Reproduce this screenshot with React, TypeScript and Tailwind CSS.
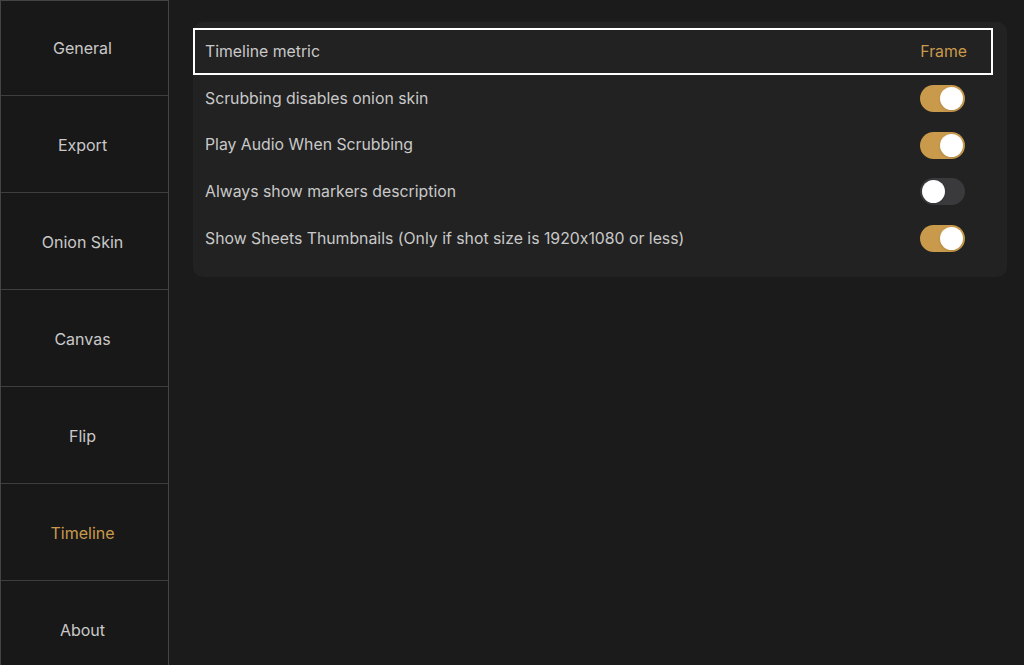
import { useState } from "react";

const tabs = ["General", "Export", "Onion Skin", "Canvas", "Flip", "Timeline", "About"];

const Toggle = ({ on, onClick }: { on: boolean; onClick: () => void }) => {
  return (
    <button
      onClick={onClick}
      className={`relative h-[27px] w-[45px] rounded-full ${on ? "bg-[#c99a4c]" : "bg-[#3a3a3c]"}`}
    >
      <span
        className={`absolute top-[2px] h-[23px] w-[23px] rounded-full bg-white shadow ${
          on ? "left-[20px]" : "left-[2px]"
        }`}
      />
    </button>
  );
};

const App = () => {
  const [active, setActive] = useState<string>("Timeline");
  const [settings, setSettings] = useState<boolean[]>([true, true, false, true]);

  const labels = [
    "Scrubbing disables onion skin",
    "Play Audio When Scrubbing",
    "Always show markers description",
    "Show Sheets Thumbnails (Only if shot size is 1920x1080 or less)",
  ];

  const flip = (i: number) => {
    const next = [...settings];
    next[i] = !next[i];
    setSettings(next);
  };

  return (
    <div
      className="flex h-[665px] w-[1024px] overflow-hidden bg-[#1b1b1b] text-[#c9c9c9] [font-feature-settings:'calt'_0]"
      style={{ fontFamily: "Inter, 'Noto Sans', sans-serif" }}
    >
      <div className="flex w-[169px] shrink-0 flex-col border-l border-r border-t border-[#444] bg-[#181818]">
        {tabs.map((tab, i) => (
          <button
            key={tab}
            onClick={() => setActive(tab)}
            className={`flex shrink-0 items-center justify-center border-b border-[#3e3e3e] pr-[4px] text-[16px] ${
              i === 0 ? "h-[95px]" : "h-[97px] pt-[2px]"
            } ${active === tab ? "text-[#c99a4c]" : "text-[#c9c9c9]"}`}
          >
            {tab}
          </button>
        ))}
      </div>

      <div className="flex-1 pl-[24px] pr-[17px] pt-[22px]">
        <div className="rounded-[10px] bg-[#222222] pb-[15px] pt-[6px]">
          <div className="mr-[14px] flex h-[47px] items-center justify-between border-2 border-white pl-[10px] pr-[24px]">
            <span className="text-[15.8px]">Timeline metric</span>
            <span className="text-[15.8px] text-[#c99a4c]">Frame</span>
          </div>
          {labels.map((label, i) => (
            <div key={label} className="flex h-[46.7px] items-center justify-between pl-[12px] pr-[42px]">
              <span className="text-[15.8px]">{label}</span>
              <Toggle on={settings[i]} onClick={() => flip(i)} />
            </div>
          ))}
        </div>
      </div>
    </div>
  );
};

export default App;
